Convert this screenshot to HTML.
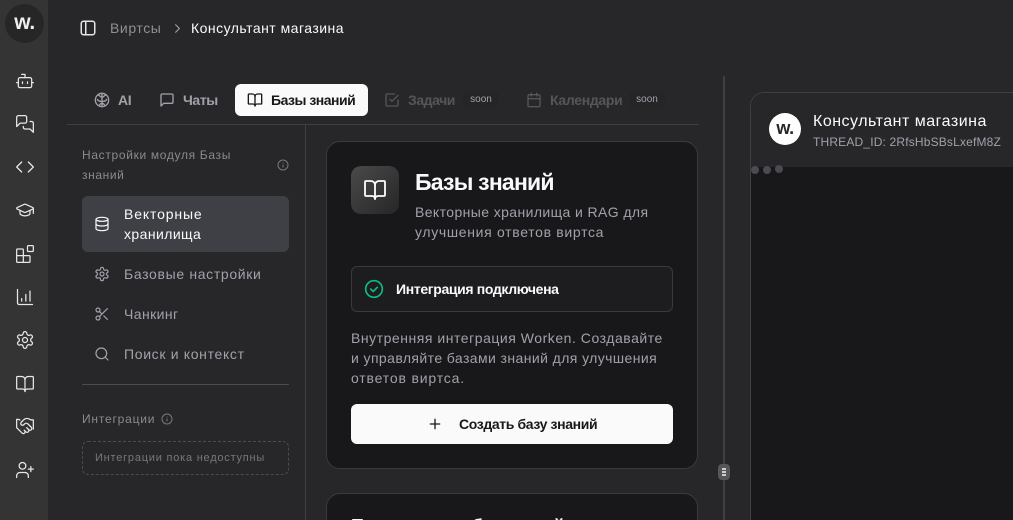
<!DOCTYPE html>
<html lang="ru"><head><meta charset="utf-8"><title>Базы знаний</title>
<style>
*{box-sizing:border-box;margin:0;padding:0}
html,body{width:1013px;height:520px;overflow:hidden;background:#27272a;font-family:"Liberation Sans",sans-serif}
#r{position:relative;width:1013px;height:520px;overflow:hidden;background:#27272a}
.a{position:absolute;white-space:nowrap}
svg{position:absolute;fill:none;stroke-linecap:round;stroke-linejoin:round;stroke-width:1.6}
.side svg{stroke:#e8e8e8;left:15px;width:20px;height:20px;stroke-width:1.5}
.tab{font-size:14px;font-weight:700;top:92px;line-height:16px}
.nav{left:124px;font-size:14px;color:#a1a1aa;letter-spacing:.66px;line-height:20px}
.p{font-size:14px;line-height:20px;color:#a1a1aa;letter-spacing:.43px}
</style></head><body><div id="r">
<div class="a side" style="left:0;top:0;width:48px;height:520px;background:#343434">
<div class="a" style="left:5px;top:4px;width:39px;height:39px;border-radius:50%;background:#262626;color:#eee;font-weight:700;font-size:21px;text-align:center;line-height:38px;letter-spacing:-.5px">w.</div>
<svg viewBox="0 0 24 24" style="top:71px"><path d="M12 8V4H8"/><rect x="4" y="8" width="16" height="12" rx="2"/><path d="M2 14h2M20 14h2M15 13v2M9 13v2"/></svg>
<svg viewBox="0 0 24 24" style="top:114px"><path d="M14 9a2 2 0 0 1-2 2H6l-4 4V4a2 2 0 0 1 2-2h8a2 2 0 0 1 2 2z"/><path d="M18 9h2a2 2 0 0 1 2 2v11l-4-4h-6a2 2 0 0 1-2-2v-1"/></svg>
<svg viewBox="0 0 24 24" style="top:157px"><path d="m16 18 6-6-6-6M8 6l-6 6 6 6"/></svg>
<svg viewBox="0 0 24 24" style="top:200px"><path d="M21.4 10.9a1 1 0 0 0 0-1.8L12.8 5.2a2 2 0 0 0-1.7 0L2.6 9.1a1 1 0 0 0 0 1.8l8.5 3.9a2 2 0 0 0 1.7 0z"/><path d="M22 10v6M6 12.5V16a6 3 0 0 0 12 0v-3.5"/></svg>
<svg viewBox="0 0 24 24" style="top:244px"><rect x="15" y="2" width="7" height="7" rx="1"/><path d="M10 22V7a1 1 0 0 0-1-1H3a1 1 0 0 0-1 1v14a1 1 0 0 0 1 1h14a1 1 0 0 0 1-1v-6a1 1 0 0 0-1-1H2"/></svg>
<svg viewBox="0 0 24 24" style="top:287px"><path d="M3 3v16a2 2 0 0 0 2 2h16M8 17v-3M13 17V9M18 17V5"/></svg>
<svg viewBox="0 0 24 24" style="top:330px"><path d="M12.2 2h-.4a2 2 0 0 0-2 2v.2a2 2 0 0 1-1 1.7l-.4.3a2 2 0 0 1-2 0l-.2-.1a2 2 0 0 0-2.7.7l-.2.4a2 2 0 0 0 .7 2.7l.2.1a2 2 0 0 1 1 1.7v.5a2 2 0 0 1-1 1.8l-.2.1a2 2 0 0 0-.7 2.7l.2.4a2 2 0 0 0 2.7.7l.2-.1a2 2 0 0 1 2 0l.4.3a2 2 0 0 1 1 1.7v.2a2 2 0 0 0 2 2h.4a2 2 0 0 0 2-2v-.2a2 2 0 0 1 1-1.7l.4-.3a2 2 0 0 1 2 0l.2.1a2 2 0 0 0 2.7-.7l.2-.4a2 2 0 0 0-.7-2.7l-.2-.1a2 2 0 0 1-1-1.8v-.5a2 2 0 0 1 1-1.7l.2-.1a2 2 0 0 0 .7-2.7l-.2-.4a2 2 0 0 0-2.7-.7l-.2.1a2 2 0 0 1-2 0l-.4-.3a2 2 0 0 1-1-1.7V4a2 2 0 0 0-2-2z"/><circle cx="12" cy="12" r="3"/></svg>
<svg viewBox="0 0 24 24" style="top:374px"><path d="M12 7v14"/><path d="M3 18a1 1 0 0 1-1-1V4a1 1 0 0 1 1-1h5a4 4 0 0 1 4 4 4 4 0 0 1 4-4h5a1 1 0 0 1 1 1v13a1 1 0 0 1-1 1h-6a3 3 0 0 0-3 3 3 3 0 0 0-3-3z"/></svg>
<svg viewBox="0 0 24 24" style="top:416px"><path d="m11 17 2 2a1 1 0 1 0 3-3"/><path d="m14 14 2.5 2.5a1 1 0 1 0 3-3l-3.9-3.9a3 3 0 0 0-4.2 0l-.9.9a1 1 0 1 1-3-3l2.8-2.8a5.8 5.8 0 0 1 7.1-.9l.5.3a4 4 0 0 0 2.1.6H22v11"/><path d="M2 4h1.5a4 4 0 0 1 2.1.6l.3.2M2 4v10l6.5 6.5a1 1 0 1 0 3-3"/></svg>
<svg viewBox="0 0 24 24" style="top:460px"><path d="M16 21v-2a4 4 0 0 0-4-4H6a4 4 0 0 0-4 4v2"/><circle cx="9" cy="7" r="4"/><path d="M19 8v6M22 11h-6"/></svg>
</div>

<svg viewBox="0 0 24 24" style="left:79px;top:19px;width:18px;height:18px;stroke:#e4e4e7;stroke-width:2"><rect x="3" y="3" width="18" height="18" rx="3"/><path d="M9 3v18"/></svg>
<div class="a" style="left:110px;top:19px;font-size:14px;line-height:18px;color:#8f8f94;letter-spacing:.58px">Виртсы</div>
<svg viewBox="0 0 24 24" style="left:170px;top:21px;width:15px;height:15px;stroke:#a1a1aa;stroke-width:1.8"><path d="m9 6 6 6-6 6"/></svg>
<div class="a" style="left:191px;top:19px;font-size:14px;line-height:18px;color:#fafafa;letter-spacing:.48px">Консультант магазина</div>

<svg viewBox="0 0 24 24" style="left:94px;top:92px;width:16px;height:16px;stroke:#a1a1aa;stroke-width:2"><circle cx="12" cy="12" r="10"/><path d="M12 2v20M12 8c-3 0-3-3-5-3M12 14c-3 0-6 0-7-3M12 8c3 0 3-3 5-3M12 14c3 0 6 0 7-3M12 17c-2 0-3 1-4 3M12 17c2 0 3 1 4 3"/></svg>
<div class="a tab" style="left:118px;color:#a1a1aa;letter-spacing:-.4px">AI</div>
<svg viewBox="0 0 24 24" style="left:159px;top:92px;width:16px;height:16px;stroke:#a1a1aa;stroke-width:2"><path d="M21 15a2 2 0 0 1-2 2H7l-4 4V5a2 2 0 0 1 2-2h14a2 2 0 0 1 2 2z"/></svg>
<div class="a tab" style="left:183px;color:#a1a1aa;letter-spacing:-.4px">Чаты</div>
<div class="a" style="left:235px;top:84px;width:133px;height:32px;border-radius:6px;background:#fafafa"></div>
<svg viewBox="0 0 24 24" style="left:247px;top:92px;width:16px;height:16px;stroke:#18181b;stroke-width:2"><path d="M12 7v14"/><path d="M3 18a1 1 0 0 1-1-1V4a1 1 0 0 1 1-1h5a4 4 0 0 1 4 4 4 4 0 0 1 4-4h5a1 1 0 0 1 1 1v13a1 1 0 0 1-1 1h-6a3 3 0 0 0-3 3 3 3 0 0 0-3-3z"/></svg>
<div class="a tab" style="left:271px;color:#18181b;letter-spacing:-.5px">Базы знаний</div>
<svg viewBox="0 0 24 24" style="left:384px;top:92px;width:16px;height:16px;stroke:#56565a;stroke-width:2"><path d="m9 11 3 3L21 5"/><path d="M21 12v7a2 2 0 0 1-2 2H5a2 2 0 0 1-2-2V5a2 2 0 0 1 2-2h11"/></svg>
<div class="a tab" style="left:408px;color:#56565a;letter-spacing:-.45px">Задачи</div>
<div class="a" style="left:463px;top:92px;width:36px;height:15px;border-radius:3px;background:#252528;color:#a1a1aa;font-size:10px;line-height:15px;text-align:center">soon</div>
<svg viewBox="0 0 24 24" style="left:526px;top:92px;width:16px;height:16px;stroke:#56565a;stroke-width:2"><path d="M8 2v4M16 2v4"/><rect x="3" y="4" width="18" height="18" rx="2"/><path d="M3 10h18"/></svg>
<div class="a tab" style="left:550px;color:#56565a;letter-spacing:-.32px">Календари</div>
<div class="a" style="left:629px;top:92px;width:36px;height:15px;border-radius:3px;background:#252528;color:#a1a1aa;font-size:10px;line-height:15px;text-align:center">soon</div>

<div class="a" style="left:67px;top:124px;width:632px;height:1px;background:#3f3f42"></div>
<div class="a" style="left:305px;top:125px;width:1px;height:395px;background:#3f3f42"></div>

<div class="a" style="left:82px;top:145px;font-size:12px;line-height:20px;color:#8a8a8f;letter-spacing:.67px">Настройки модуля Базы<br><span style="letter-spacing:.6px">знаний</span></div>
<svg viewBox="0 0 24 24" style="left:277px;top:159px;width:12px;height:12px;stroke:#77777c;stroke-width:2"><circle cx="12" cy="12" r="10"/><path d="M12 16v-4M12 8h0"/></svg>
<div class="a" style="left:82px;top:196px;width:207px;height:56px;border-radius:6px;background:#3f3f46"></div>
<svg viewBox="0 0 24 24" style="left:94px;top:216px;width:16px;height:16px;stroke:#fafafa;stroke-width:1.8"><ellipse cx="12" cy="5" rx="9" ry="3"/><path d="M3 5v14a9 3 0 0 0 18 0V5"/><path d="M3 12a9 3 0 0 0 18 0"/></svg>
<div class="a nav" style="top:204px;color:#fafafa;letter-spacing:.42px"><span style="letter-spacing:.86px">Векторные</span><br>хранилища</div>
<svg viewBox="0 0 24 24" style="left:94px;top:266px;width:16px;height:16px;stroke:#a1a1aa;stroke-width:1.8"><path d="M12.2 2h-.4a2 2 0 0 0-2 2v.2a2 2 0 0 1-1 1.7l-.4.3a2 2 0 0 1-2 0l-.2-.1a2 2 0 0 0-2.7.7l-.2.4a2 2 0 0 0 .7 2.7l.2.1a2 2 0 0 1 1 1.7v.5a2 2 0 0 1-1 1.8l-.2.1a2 2 0 0 0-.7 2.7l.2.4a2 2 0 0 0 2.7.7l.2-.1a2 2 0 0 1 2 0l.4.3a2 2 0 0 1 1 1.7v.2a2 2 0 0 0 2 2h.4a2 2 0 0 0 2-2v-.2a2 2 0 0 1 1-1.7l.4-.3a2 2 0 0 1 2 0l.2.1a2 2 0 0 0 2.7-.7l.2-.4a2 2 0 0 0-.7-2.7l-.2-.1a2 2 0 0 1-1-1.8v-.5a2 2 0 0 1 1-1.7l.2-.1a2 2 0 0 0 .7-2.7l-.2-.4a2 2 0 0 0-2.7-.7l-.2.1a2 2 0 0 1-2 0l-.4-.3a2 2 0 0 1-1-1.7V4a2 2 0 0 0-2-2z"/><circle cx="12" cy="12" r="3"/></svg>
<div class="a nav" style="top:264px">Базовые настройки</div>
<svg viewBox="0 0 24 24" style="left:94px;top:306px;width:16px;height:16px;stroke:#a1a1aa;stroke-width:1.8"><circle cx="6" cy="6" r="3"/><path d="M8.1 8.1 12 12M20 4 8.1 15.9"/><circle cx="6" cy="18" r="3"/><path d="M14.8 14.8 20 20"/></svg>
<div class="a nav" style="top:304px;letter-spacing:.42px">Чанкинг</div>
<svg viewBox="0 0 24 24" style="left:94px;top:346px;width:16px;height:16px;stroke:#a1a1aa;stroke-width:1.8"><circle cx="11" cy="11" r="8"/><path d="m21 21-4.3-4.3"/></svg>
<div class="a nav" style="top:344px;letter-spacing:.67px">Поиск и контекст</div>
<div class="a" style="left:82px;top:384px;width:207px;height:1px;background:#4c4c50"></div>
<div class="a" style="left:82px;top:409px;font-size:12px;line-height:20px;color:#8a8a8f;letter-spacing:.8px">Интеграции</div>
<svg viewBox="0 0 24 24" style="left:161px;top:413px;width:12px;height:12px;stroke:#77777c;stroke-width:2"><circle cx="12" cy="12" r="10"/><path d="M12 16v-4M12 8h0"/></svg>
<div class="a" style="left:82px;top:441px;width:207px;height:34px;border:1px dashed #4c4c50;border-radius:6px;color:#77777c;font-size:11px;line-height:33px;padding-left:12px;letter-spacing:.78px">Интеграции пока недоступны</div>

<div class="a" style="left:326px;top:141px;width:372px;height:328px;background:#18181b;border:1px solid #3a3a3d;border-radius:14px"></div>
<div class="a" style="left:351px;top:166px;width:48px;height:48px;border-radius:10px;background:linear-gradient(135deg,#4a4a4a,#262626)"></div>
<svg viewBox="0 0 24 24" style="left:363px;top:178px;width:24px;height:24px;stroke:#fff;stroke-width:1.8"><path d="M12 7v14"/><path d="M3 18a1 1 0 0 1-1-1V4a1 1 0 0 1 1-1h5a4 4 0 0 1 4 4 4 4 0 0 1 4-4h5a1 1 0 0 1 1 1v13a1 1 0 0 1-1 1h-6a3 3 0 0 0-3 3 3 3 0 0 0-3-3z"/></svg>
<div class="a" style="left:415px;top:168px;font-size:23px;line-height:28px;font-weight:700;color:#fafafa;letter-spacing:-.78px">Базы знаний</div>
<div class="a p" style="left:415px;top:202px"><span style="letter-spacing:.4px">Векторные хранилища и RAG для</span><br><span style="letter-spacing:.68px">улучшения ответов виртса</span></div>
<div class="a" style="left:351px;top:266px;width:322px;height:46px;background:#1d1d20;border:1px solid #3a3a3d;border-radius:6px"></div>
<svg viewBox="0 0 24 24" style="left:364px;top:279px;width:20px;height:20px;stroke:#10b981;stroke-width:2"><circle cx="12" cy="12" r="10"/><path d="m8 12 3 3 5-5"/></svg>
<div class="a" style="left:396px;top:281px;font-size:14px;line-height:16px;font-weight:700;color:#fafafa;letter-spacing:-.35px">Интеграция подключена</div>
<div class="a p" style="left:351px;top:328px"><span style="letter-spacing:.53px">Внутренняя интеграция Worken. Создавайте</span><br><span style="letter-spacing:.41px">и управляйте базами знаний для улучшения</span><br><span style="letter-spacing:.83px">ответов виртса.</span></div>
<div class="a" style="left:351px;top:404px;width:322px;height:40px;background:#fafafa;border-radius:6px"></div>
<svg viewBox="0 0 24 24" style="left:427px;top:416px;width:16px;height:16px;stroke:#18181b;stroke-width:2"><path d="M5 12h14M12 5v14"/></svg>
<div class="a" style="left:459px;top:416px;font-size:14px;line-height:16px;font-weight:700;color:#18181b;letter-spacing:-.37px">Создать базу знаний</div>

<div class="a" style="left:326px;top:493px;width:372px;height:27px;background:#18181b;border:1px solid #3a3a3d;border-bottom:0;border-radius:14px 14px 0 0;overflow:hidden">
<div style="position:absolute;left:24px;top:21px;width:340px;height:5px;overflow:hidden;font-size:18px;line-height:22px;font-weight:700;color:#fafafa;letter-spacing:-.6px;white-space:nowrap">Подключение баз знаний</div>
</div>

<div class="a" style="left:723px;top:76px;width:2px;height:444px;background:#3f3f42"></div>
<div class="a" style="left:718px;top:464px;width:12px;height:16px;border-radius:4px;background:#56565a"></div>
<div class="a" style="left:722px;top:468px;width:4px;height:8px;background:repeating-linear-gradient(180deg,#ccc 0 2px,#56565a 2px 3px)"></div>

<div class="a" style="left:750px;top:92px;width:263px;height:428px;background:#18181b;border:1px solid #3f3f42;border-right:0;border-bottom:0;border-radius:14px 0 0 0;overflow:hidden">
<div class="a" style="left:0;top:0;width:100%;height:74px;background:#27272a"></div>
<div class="a" style="left:18px;top:20px;width:32px;height:32px;border-radius:50%;background:#fff;color:#27272a;font-weight:700;font-size:18px;line-height:31px;text-align:center;letter-spacing:-.5px">w.</div>
<div class="a" style="left:0;top:73px;width:8px;height:8px;border-radius:50%;background:#4a4a50"></div>
<div class="a" style="left:12px;top:73px;width:8px;height:8px;border-radius:50%;background:#4a4a50"></div>
<div class="a" style="left:24px;top:72px;width:8px;height:8px;border-radius:50%;background:#4a4a50"></div>
</div>
<div class="a" style="left:813px;top:112px;font-size:16px;line-height:20px;color:#fafafa;letter-spacing:.5px">Консультант магазина</div>
<div class="a" style="left:813px;top:134px;font-size:12px;line-height:16px;color:#a1a1aa;letter-spacing:.17px">THREAD_ID: 2RfsHbSBsLxefM8Z</div>
</div></body></html>
